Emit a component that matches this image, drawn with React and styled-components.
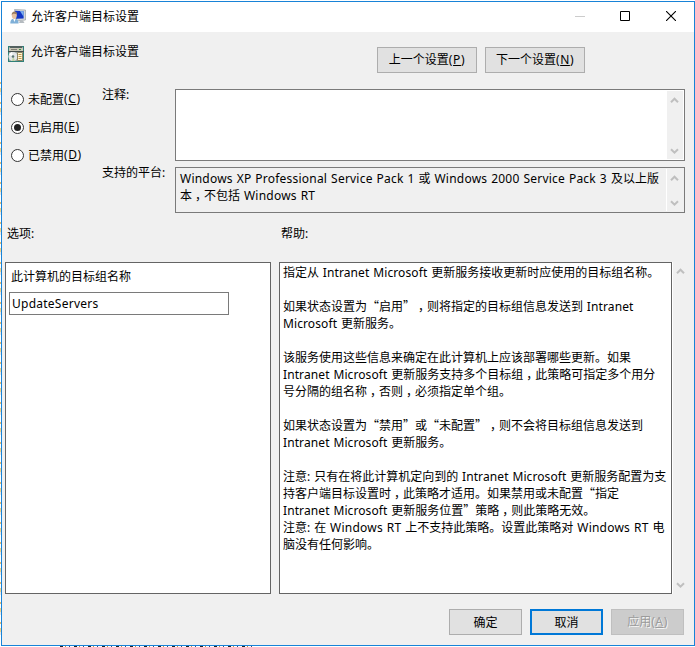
import React, { useState } from "react";
import styled, { createGlobalStyle } from "styled-components";

const GlobalStyle = createGlobalStyle`
  * {
    box-sizing: border-box;
  }
  body {
    margin: 0;
    background: #fff;
    overflow: hidden;
  }
`;

// the strip of the page that shows behind the window
const Desktop = styled.div`
  width: 695px;
  height: 647px;
  padding: 1px 0 0 1px;
  overflow: hidden;
  background:
    repeating-linear-gradient(
        90deg,
        #222 0 3px,
        #fff 3px 5px,
        #c98a3a 5px 6px,
        #fff 6px 9px,
        #3a4a7a 9px 10px,
        #fff 10px 14px
      )
      60px 646px / 192px 1px no-repeat,
    repeating-linear-gradient(
        180deg,
        #fff 0 7px,
        #e2bd7a 7px 9px,
        #fff 9px 13px,
        #f2d48c 13px 17px,
        #e8e8e8 17px 20px
      )
      0 75px / 1px 560px no-repeat,
    #fff;
`;

const Window = styled.div`
  display: flex;
  flex-direction: column;
  width: 694px;
  height: 645px;
  border: 1px solid #1883d7;
  background: #f0f0f0;
  color: #000;
  font-family: "Noto Sans CJK SC", "Noto Sans", sans-serif;
  font-size: 12px;
  line-height: 17px;
  white-space: nowrap;
  text-spacing-trim: space-all;
`;

const TitleBar = styled.div`
  display: flex;
  height: 30px;
  padding-left: 8px;
  background: #fff;
`;

const TitleText = styled.div`
  flex: 1;
  padding: 5px 0 0 4px;
`;

const IconBox = styled.div`
  width: 17px;
  height: 17px;
  margin-top: ${(props) => props.$top}px;
  svg {
    display: block;
  }
`;

const WindowButton = styled.div`
  display: flex;
  align-items: center;
  justify-content: center;
  width: 46px;
  height: 28px;
  &:first-child {
    padding-left: 2px;
  }
`;

const WindowButtons = styled.div`
  display: flex;
`;

const Header = styled.div`
  display: flex;
  height: 57px;
  padding-left: 6px;
`;

const HeaderTitle = styled.div`
  width: 352px;
  padding: 10px 0 0 6px;
`;

const Button = styled.button`
  width: ${(props) => props.$width}px;
  height: 26px;
  padding: 0 0 2px;
  border: ${(props) =>
    props.$focused ? "2px solid #0078d7" : "1px solid #adadad"};
  border-radius: 0;
  background: #e1e1e1;
  color: #000;
  font: inherit;
  line-height: 17px;
  white-space: nowrap;
  &:disabled {
    border-color: #bfbfbf;
    background: #ccc;
    color: #9b9b9b;
    text-shadow: 1px 1px 0 #f4f4f4;
  }
`;

const HeaderButtons = styled.div`
  display: flex;
  gap: 8px;
  padding-top: 15px;
`;

const Settings = styled.div`
  display: grid;
  grid-template-columns: 91px 73px 510px;
  height: 124px;
  padding-left: 9px;
`;

const Radios = styled.div`
  display: flex;
  flex-direction: column;
  gap: 11px;
  padding-top: 1px;
`;

const RadioRow = styled.div`
  display: flex;
  height: 17px;
  cursor: default;
`;

const RadioMark = styled.span`
  display: flex;
  align-items: center;
  justify-content: center;
  width: 13px;
  height: 13px;
  margin: 3px 4px 0 0;
  border: 1px solid #333;
  border-radius: 50%;
  background: #fff;
  &::after {
    content: "";
    width: 7px;
    height: 7px;
    border-radius: 50%;
    background: ${(props) => (props.$checked ? "#222" : "transparent")};
  }
`;

const FieldLabels = styled.div`
  display: flex;
  flex-direction: column;
  gap: 60px;
  margin-top: -4px;
`;

const Fields = styled.div`
  display: flex;
  flex-direction: column;
  gap: 6px;
`;

const FieldBox = styled.div`
  display: flex;
  justify-content: space-between;
  height: ${(props) => props.$height}px;
  padding: 1px;
  border: 1px solid #7a7a7a;
  background: ${(props) => (props.$readOnly ? "#f0f0f0" : "#fff")};
`;

const FieldText = styled.div`
  padding: 0 0 0 3px;
`;

const ScrollTrack = styled.div`
  display: flex;
  flex-direction: column;
  align-items: center;
  justify-content: space-between;
  width: 17px;
  padding: 6px 1px 4px 0;
  border-left: 1px solid #fff;
  background: #f0f0f0;
`;

const Captions = styled.div`
  display: grid;
  grid-template-columns: 274px 1fr;
  height: 49px;
  padding: 11px 0 0 5px;
`;

const Panes = styled.div`
  display: flex;
  height: 332px;
  padding-left: 3px;
  > ${ScrollTrack} {
    width: 16px;
    padding: 6px 0 5px;
  }
`;

const OptionsPane = styled.div`
  width: 266px;
  margin-right: 8px;
  padding: 4px 3px;
  border: 1px solid #646464;
  background: #fff;
`;

const OptionLabel = styled.div`
  padding: 0 0 8px 2px;
`;

const TextInput = styled.input`
  display: block;
  width: 220px;
  height: 23px;
  padding: 0 2px 1px;
  border: 1px solid #7a7a7a;
  outline: none;
  color: #000;
  font: 12px/17px "Noto Sans", sans-serif;
  letter-spacing: 0.25px;
`;

const HelpPane = styled.div`
  width: 393px;
  padding: 0 0 0 3px;
  border: 1px solid #646464;
  background: #fff;
`;

const Line = styled.div`
  height: 17px;
`;

const Latin = styled.span`
  font-family: "Noto Sans", sans-serif;
  letter-spacing: ${(props) => props.$tracking || 0.1}px;
  word-spacing: 0.6px;
  white-space: pre;
`;

const Comma = styled.span`
  padding-left: 3px;
  letter-spacing: -3px;
`;

const Footer = styled.div`
  display: flex;
  gap: 8px;
  justify-content: flex-end;
  padding: 15px 10px 0 0;
`;

// Latin runs use their own face, CJK commas sit further right in their cell
const Mixed = ({ text }) =>
  text.split(/([\x20-\x7e]+|，)/).map((part, i) => {
    if (part === "，") return <Comma key={i}>{part}</Comma>;
    if (/^[\x20-\x7e]+$/.test(part)) {
      return (
        <Latin key={i} $tracking={part.includes("Windows") ? 0.215 : 0.1}>
          {part}
        </Latin>
      );
    }
    return part;
  });

const Accel = ({ text, letter }) => (
  <>
    {text}
    <Latin $tracking={0.6}>
      (<u>{letter}</u>)
    </Latin>
  </>
);

const Arrow = ({ down }) => (
  <svg width="9" height="7" viewBox="0 0 9 7">
    <path
      d={down ? "M1 1.2 4.5 4.7 8 1.2" : "M1 5.2 4.5 1.7 8 5.2"}
      fill="none"
      stroke="#bfbfbf"
      strokeWidth="2"
    />
  </svg>
);

const ScrollBar = () => (
  <ScrollTrack>
    <Arrow />
    <Arrow down />
  </ScrollTrack>
);

const UserScreenIcon = () => (
  <svg width="17" height="16" viewBox="0 0 17 16">
    <path d="M4.500 0.500 15.500 1v10L6 12z" fill="#d3d7da" stroke="#8d959b" strokeWidth="0.6" />
    <path d="M5 1.800 13.600 2.200v7.400L6 9.800z" fill="#1336c4" />
    <path d="M10 2 13.600 2.200v5.500z" fill="#7fb2f0" />
    <path d="M10 11.500h3l1.500 2.500H9z" fill="#b5bbc0" />
    <path d="M0.300 14.500c0-3.500 1.500-4.700 3.900-4.700s4.400 1.200 4.400 4.700z" fill="#7fb0d8" />
    <path d="M3.300 10 4.400 13 5.600 10z" fill="#fff" />
    <ellipse cx="4.300" cy="6.300" rx="2.500" ry="3.600" fill="#e5c19f" />
    <path d="M1.700 6C1.300 1.700 7.200 1.200 7 5.300 5.500 4.600 3 4 1.700 6z" fill="#9a7c60" />
  </svg>
);

const PolicyIcon = () => (
  <svg width="16" height="16" viewBox="0 0 16 16">
    <path d="M0 0h16v16H0z" fill="#2f7f78" />
    <path d="M1 1h14v14H1z" fill="#9aa3a0" />
    <path d="M2 0h12v2H2z" fill="#53605f" />
    <path d="M1 2h14v3H1z" fill="#c9c6b6" />
    <path d="M3 3h6v1H3z" fill="#807e74" />
    <path d="M11 3h2v1h-2z" fill="#3d8b3d" />
    <path d="M0 5h16v1H0z" fill="#444d4c" />
    <circle cx="5" cy="10.500" r="4.600" fill="#e3e6e8" />
    <path d="M5 10.500 1 8.500A4.600 4.600 0 0 1 4 6z" fill="#fff" />
    <path d="M5 10.500 4 15a4.600 4.600 0 0 0 3-0.500z" fill="#c1d3a1" />
    <circle cx="5" cy="10.500" r="1.300" fill="#5b7774" />
    <path d="M9.500 6.500h5v8h-5z" fill="#fff6d8" stroke="#8e8462" />
    <path d="M10.500 8.500h3M10.500 10.500h3M10.500 12.500h3" stroke="#c09a4a" />
  </svg>
);

const states = [
  { text: "未配置", letter: "C" },
  { text: "已启用", letter: "E" },
  { text: "已禁用", letter: "D" },
];

const platformLines = [
  "Windows XP Professional Service Pack 1 或 Windows 2000 Service Pack 3 及以上版",
  "本，不包括 Windows RT",
];

const helpLines = [
  "指定从 Intranet Microsoft 更新服务接收更新时应使用的目标组名称。",
  "",
  "如果状态设置为“启用”，则将指定的目标组信息发送到 Intranet",
  "Microsoft 更新服务。",
  "",
  "该服务使用这些信息来确定在此计算机上应该部署哪些更新。如果",
  "Intranet Microsoft 更新服务支持多个目标组，此策略可指定多个用分",
  "号分隔的组名称，否则，必须指定单个组。",
  "",
  "如果状态设置为“禁用”或“未配置”，则不会将目标组信息发送到",
  "Intranet Microsoft 更新服务。",
  "",
  "注意: 只有在将此计算机定向到的 Intranet Microsoft 更新服务配置为支",
  "持客户端目标设置时，此策略才适用。如果禁用或未配置“指定",
  "Intranet Microsoft 更新服务位置”策略，则此策略无效。",
  "注意: 在 Windows RT 上不支持此策略。设置此策略对 Windows RT 电",
  "脑没有任何影响。",
];

const App = () => {
  const [selected, setSelected] = useState("E");
  const [group, setGroup] = useState("UpdateServers");

  return (
    <Desktop lang="zh-CN">
      <GlobalStyle />
      <Window>
        <TitleBar>
          <IconBox $top={7}>
            <UserScreenIcon />
          </IconBox>
          <TitleText>允许客户端目标设置</TitleText>
          <WindowButtons>
            <WindowButton>
              <svg width="10" height="10">
                <path d="M0 5.500h10" stroke="#ccc" />
              </svg>
            </WindowButton>
            <WindowButton>
              <svg width="10" height="10">
                <path d="M0.500 0.500h9v9h-9z" fill="none" stroke="#000" />
              </svg>
            </WindowButton>
            <WindowButton>
              <svg width="10" height="10">
                <path d="M0 0 10 10M10 0 0 10" stroke="#000" strokeWidth="1.100" />
              </svg>
            </WindowButton>
          </WindowButtons>
        </TitleBar>
        <Header>
          <IconBox $top={14}>
            <PolicyIcon />
          </IconBox>
          <HeaderTitle>允许客户端目标设置</HeaderTitle>
          <HeaderButtons>
            <Button $width={100}>
              <Accel text="上一个设置" letter="P" />
            </Button>
            <Button $width={100}>
              <Accel text="下一个设置" letter="N" />
            </Button>
          </HeaderButtons>
        </Header>
        <Settings>
          <Radios>
            {states.map((state) => (
              <RadioRow
                key={state.letter}
                onClick={() => setSelected(state.letter)}
              >
                <RadioMark $checked={selected === state.letter} />
                <Accel text={state.text} letter={state.letter} />
              </RadioRow>
            ))}
          </Radios>
          <FieldLabels>
            <div>
              <Mixed text="注释:" />
            </div>
            <div>
              <Mixed text="支持的平台:" />
            </div>
          </FieldLabels>
          <Fields>
            <FieldBox $height={72}>
              <FieldText />
              <ScrollBar />
            </FieldBox>
            <FieldBox $height={46} $readOnly>
              <FieldText>
                {platformLines.map((line) => (
                  <Line key={line}>
                    <Mixed text={line} />
                  </Line>
                ))}
              </FieldText>
              <ScrollBar />
            </FieldBox>
          </Fields>
        </Settings>
        <Captions>
          <div>
            <Mixed text="选项:" />
          </div>
          <div>
            <Mixed text="帮助:" />
          </div>
        </Captions>
        <Panes>
          <OptionsPane>
            <OptionLabel>此计算机的目标组名称</OptionLabel>
            <TextInput
              value={group}
              onChange={(e) => setGroup(e.target.value)}
            />
          </OptionsPane>
          <HelpPane>
            {helpLines.map((line, i) => (
              <Line key={i}>
                <Mixed text={line} />
              </Line>
            ))}
          </HelpPane>
          <ScrollBar />
        </Panes>
        <Footer>
          <Button $width={73}>确定</Button>
          <Button $width={73} $focused>
            取消
          </Button>
          <Button $width={73} disabled>
            <Accel text="应用" letter="A" />
          </Button>
        </Footer>
      </Window>
    </Desktop>
  );
};

export default App;
